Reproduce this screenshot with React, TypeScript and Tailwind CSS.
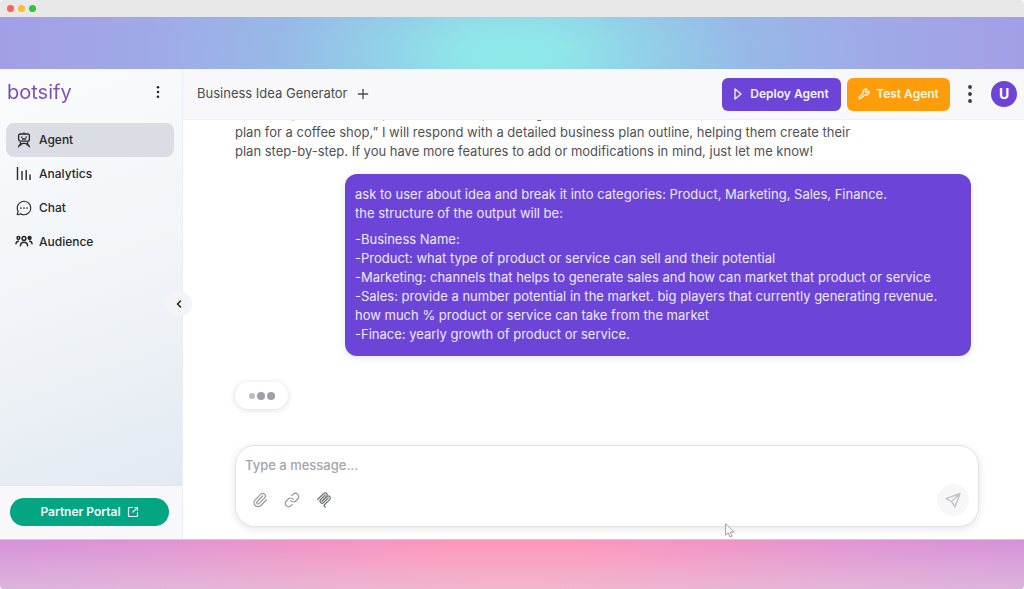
import { useState } from "react"
import { ChevronLeft, Link, Paperclip, Plus, SquareArrowOutUpRight, Wrench } from "lucide-react"
import { PiChatCircleDots } from "react-icons/pi"

function AgentIcon() {
  return (
    <svg viewBox="0 0 16 16" className="size-4" fill="none" stroke="currentColor" strokeWidth="1.3" strokeLinecap="round">
      <path d="M8 2V.8M4.200 2h7.600a1.600 1.600 0 0 1 1.600 1.600v3.600a2 2 0 0 1-2 2H4.600a2 2 0 0 1-2-2V3.600A1.600 1.600 0 0 1 4.200 2Z" />
      <path d="M5.800 4.800v.8M10.200 4.800v.8M6.500 7h3M2.600 14.800c.5-2.200 2-3.400 5.400-3.400s4.900 1.200 5.400 3.400M5 13.200l-.8-2.800M11 13.200l.8-2.800" />
    </svg>
  )
}

function AnalyticsIcon() {
  return (
    <svg viewBox="0 0 16 16" className="size-4" fill="none" stroke="currentColor" strokeWidth="1.4">
      <path d="M1.500 1v13M6 5v9M10.200 4v10M14 8.500V14" />
    </svg>
  )
}

function AudienceIcon() {
  return (
    <svg viewBox="0 0 18 16" className="h-4 w-[18px]" fill="none" stroke="currentColor" strokeWidth="1.5" strokeLinecap="round">
      <circle cx="9" cy="4.400" r="1.900" />
      <circle cx="3.400" cy="4" r="1.400" />
      <circle cx="14.600" cy="4" r="1.400" fill="currentColor" />
      <path d="M5.400 11.800c.2-2.400 1.500-3.600 3.600-3.600s3.400 1.200 3.600 3.600M1 9.800c.1-1.600.8-2.400 2.400-2.600M17 9.800c-.1-1.600-.8-2.400-2.400-2.600" />
    </svg>
  )
}

function McpIcon() {
  return (
    <svg viewBox="0 0 180 180" className="size-4" fill="none" stroke="currentColor" strokeWidth="14" strokeLinecap="round">
      <path d="M18 84.853 85.882 16.971c9.373-9.373 24.569-9.373 33.941 0 9.373 9.372 9.373 24.568 0 33.941l-51.265 51.265" />
      <path d="m69.265 101.470 50.558-50.558c9.373-9.373 24.569-9.373 33.942 0l.353.353c9.373 9.373 9.373 24.569 0 33.941L92.725 146.600c-3.124 3.124-3.124 8.189 0 11.313l12.606 12.607" />
      <path d="M102.853 33.941 52.648 84.146c-9.372 9.372-9.372 24.568 0 33.941 9.373 9.372 24.569 9.372 33.941 0l50.205-50.205" />
    </svg>
  )
}

function MoreDots({ className }: { className: string }) {
  return (
    <svg viewBox="0 0 6 18" className={className} fill="currentColor">
      <circle cx="3" cy="2" r="1.900" />
      <circle cx="3" cy="9" r="1.900" />
      <circle cx="3" cy="16" r="1.900" />
    </svg>
  )
}

const navItems = [
  { label: "Agent", icon: <AgentIcon /> },
  { label: "Analytics", icon: <AnalyticsIcon /> },
  { label: "Chat", icon: <PiChatCircleDots className="size-[18px]" /> },
  { label: "Audience", icon: <AudienceIcon /> },
]

const requestLines = [
  "-Business Name:",
  "-Product: what type of product or service can sell and their potential",
  "-Marketing: channels that helps to generate sales and how can market that product or service",
  "-Sales: provide a number potential in the market. big players that currently generating revenue.",
  "how much % product or service can take from the market",
  "-Finace: yearly growth of product or service.",
]

function Sidebar() {
  const [active, setActive] = useState("Agent")

  return (
    <aside className="relative z-10 flex w-[183px] shrink-0 flex-col border-r border-[#e9edf5] bg-[linear-gradient(160deg,#fafbfc_0%,#f0f4f8_50%,#dfe7f0_100%)]">
      <div className="flex h-[54px] items-center justify-between pr-5 pb-2 pl-[7px]">
        <a href="#" className="bg-linear-to-r from-[#8145b5] to-[#7557bd] bg-clip-text text-xl leading-7 text-transparent">
          botsify
        </a>
        <button aria-label="Workspace menu" className="text-[#222]">
          <MoreDots className="h-3 w-2" />
        </button>
      </div>

      <nav className="flex flex-1 flex-col px-[6px]">
        {navItems.map((item) => (
          <button
            key={item.label}
            onClick={() => setActive(item.label)}
            className={`mr-0.5 flex h-[34px] items-center gap-1.5 rounded-lg pl-[9px] text-xs font-medium text-[#25272b] ${
              active === item.label ? "bg-[#dadde3]" : ""
            }`}
          >
            <span className="flex w-[18px] justify-center">{item.icon}</span>
            {item.label}
          </button>
        ))}
      </nav>

      <div className="border-t border-[#e3e6ec] bg-[#f8f8fb] pt-3 pr-[13px] pb-[13px] pl-[10px]">
        <a
          href="#"
          className="flex h-7 items-center justify-center gap-1.5 rounded-full bg-[#04a582] text-xs font-semibold text-[#effbf7]"
        >
          Partner Portal
          <SquareArrowOutUpRight className="size-3" strokeWidth={2.4} />
        </a>
      </div>

      <button
        aria-label="Collapse sidebar"
        className="absolute top-1/2 -right-[10px] flex size-[26px] -translate-y-1/2 items-center justify-center rounded-full bg-[#f2f4f6] text-[#1c1c1c]"
      >
        <ChevronLeft className="size-3" strokeWidth={3} />
      </button>
    </aside>
  )
}

function Header() {
  return (
    <header className="flex h-[51px] shrink-0 items-center border-b border-[#edf0f6] bg-[#f8f8fb] pr-[7px] pl-[14px]">
      <h1 className="text-[13px] text-[#4b4c50]">Business Idea Generator</h1>
      <button aria-label="New agent" className="ml-[7px] text-[#4b4c50]">
        <Plus className="size-4" strokeWidth={2} />
      </button>
      <div className="ml-auto flex items-center">
        <button className="flex h-[33px] w-[119px] items-center justify-center gap-2 rounded-md bg-[#6c45d8] text-xs font-semibold text-[#f6f2ff]">
          <svg viewBox="0 0 8 12" className="h-3 w-2" fill="none" stroke="currentColor" strokeWidth="1.3" strokeLinejoin="round">
            <path d="M1 1v10l6-5Z" />
          </svg>
          Deploy Agent
        </button>
        <button className="ml-1.5 flex h-[33px] w-[103px] items-center justify-center gap-1.5 rounded-md bg-[#fe9d0b] text-xs font-semibold text-[#fff6e2]">
          <Wrench className="size-3" strokeWidth={2.4} />
          Test Agent
        </button>
        <button aria-label="More options" className="ml-4 text-[#3a3a3c]">
          <MoreDots className="h-[18px] w-2" />
        </button>
        <button aria-label="Account" className="ml-[17px] size-[26px] rounded-full bg-[#6c45d8] text-sm font-bold text-white">
          U
        </button>
      </div>
    </header>
  )
}

function Messages() {
  return (
    <section className="-ml-2 flex flex-1 flex-col justify-end overflow-hidden pl-2 text-[13px] leading-[19px]">
      {/* older text is cut off by the header */}
      <div className="-mt-4 max-w-[640px] text-[#4f5155]">
        <p>For example, if a user inputs, “I need help creating a business</p>
        <p>plan for a coffee shop,” I will respond with a detailed business plan outline, helping them create their</p>
        <p>plan step-by-step. If you have more features to add or modifications in mind, just let me know!</p>
      </div>

      <div className="mt-[13px] mr-2 w-[626px] max-w-full self-end rounded-xl bg-[#6c45d8] px-[10px] pt-[11px] pb-3 text-[#eee8fd] shadow-[0_2px_8px_rgba(120,180,240,0.25)]">
        <p>ask to user about idea and break it into categories: Product, Marketing, Sales, Finance.</p>
        <p>the structure of the output will be:</p>
        <div className="mt-[7px]">
          {requestLines.map((line) => (
            <p key={line}>{line}</p>
          ))}
        </div>
      </div>

      <div
        aria-label="Agent is typing"
        className="mt-[26px] mb-9 flex h-[27px] w-[53px] items-center justify-center gap-0.5 rounded-full bg-white shadow-[0_1px_6px_rgba(0,0,0,0.14)]"
      >
        <span className="size-1.5 rounded-full bg-[#babcc4]" />
        <span className="size-2 rounded-full bg-[#9d9faa]" />
        <span className="size-2 rounded-full bg-[#9d9faa]" />
      </div>
    </section>
  )
}

function Composer() {
  const [message, setMessage] = useState("")

  return (
    <form
      onSubmit={(e) => e.preventDefault()}
      className="mb-3 shrink-0 rounded-[20px] border border-[#e2e2e4] bg-white px-[9px] pt-[9px] pb-[10px] shadow-[0_2px_8px_rgba(0,0,0,0.1)]"
    >
      <textarea
        aria-label="Message"
        rows={1}
        value={message}
        onChange={(e) => setMessage(e.target.value)}
        placeholder="Type a message..."
        className="block h-5 w-full resize-none overflow-hidden text-[13px] leading-5 font-medium text-[#4b4c50] outline-none placeholder:text-[#a3a5ad]"
      />
      <div className="mt-[9px] flex items-center gap-4 pl-[7px] text-[#98999d]">
        <button type="button" aria-label="Attach file">
          <Paperclip className="size-4" strokeWidth={1.8} />
        </button>
        <button type="button" aria-label="Add link">
          <Link className="size-4" strokeWidth={1.8} />
        </button>
        <button type="button" aria-label="Connect tools" className="text-[#77787c]">
          <McpIcon />
        </button>
        <button
          type="submit"
          aria-label="Send message"
          className="ml-auto flex size-8 items-center justify-center rounded-full bg-[#f7f7f8] text-[#c4c4c8]"
        >
          <svg viewBox="0 0 16 16" className="size-4" fill="none" stroke="currentColor" strokeWidth="1.4" strokeLinejoin="round">
            <path d="M15 1.500 1 6.600l5.500 2.900L10 15l5-13.500ZM6.500 9.500l8.500-8" />
          </svg>
        </button>
      </div>
    </form>
  )
}

export default function App() {
  return (
    <div className="relative flex min-h-screen flex-col overflow-hidden rounded-[4px] bg-white font-['Inter',sans-serif]">
      <div className="flex h-[17px] shrink-0 items-center gap-1 bg-[#e8e8e8] pl-[7px]">
        <span className="size-[7px] rounded-full bg-[#ff5f57]" />
        <span className="size-[7px] rounded-full bg-[#febb2e]" />
        <span className="size-[7px] rounded-full bg-[#27c840]" />
      </div>

      <div className="h-[52px] shrink-0 bg-[radial-gradient(ellipse_50%_420%_at_50%_70%,#8ee9e8_0%,#8fe6e8_10%,#92d0e8_26%,#97b9e7_46%,#a0a9e8_72%,#a39fe6_100%)]" />

      <div className="flex flex-1">
        <Sidebar />
        <main className="flex min-w-0 flex-1 flex-col">
          <Header />
          <div className="flex flex-1 flex-col pr-[45px] pl-[52px]">
            <Messages />
            <Composer />
          </div>
        </main>
      </div>

      <div className="h-[50px] shrink-0 border-t border-[#dcc4dc] bg-[radial-gradient(ellipse_52%_320%_at_50%_40%,#ff95bb_0%,#ff95bc_14%,#f293c6_38%,#e193d4_66%,#d391da_100%)]">
        <div className="h-full bg-linear-to-b from-transparent to-[#e5d8df]/50" />
      </div>

      {/* mouse pointer */}
      <svg viewBox="0 0 10 15" className="pointer-events-none absolute top-[523px] left-[725px] h-[15px] w-[10px]">
        <path d="M.6.800v11.400l2.600-2.400 1.800 4.200 2-.8-1.800-4.100h3.800Z" fill="#fff" stroke="#a0a0a0" strokeWidth="1" />
      </svg>
    </div>
  )
}
